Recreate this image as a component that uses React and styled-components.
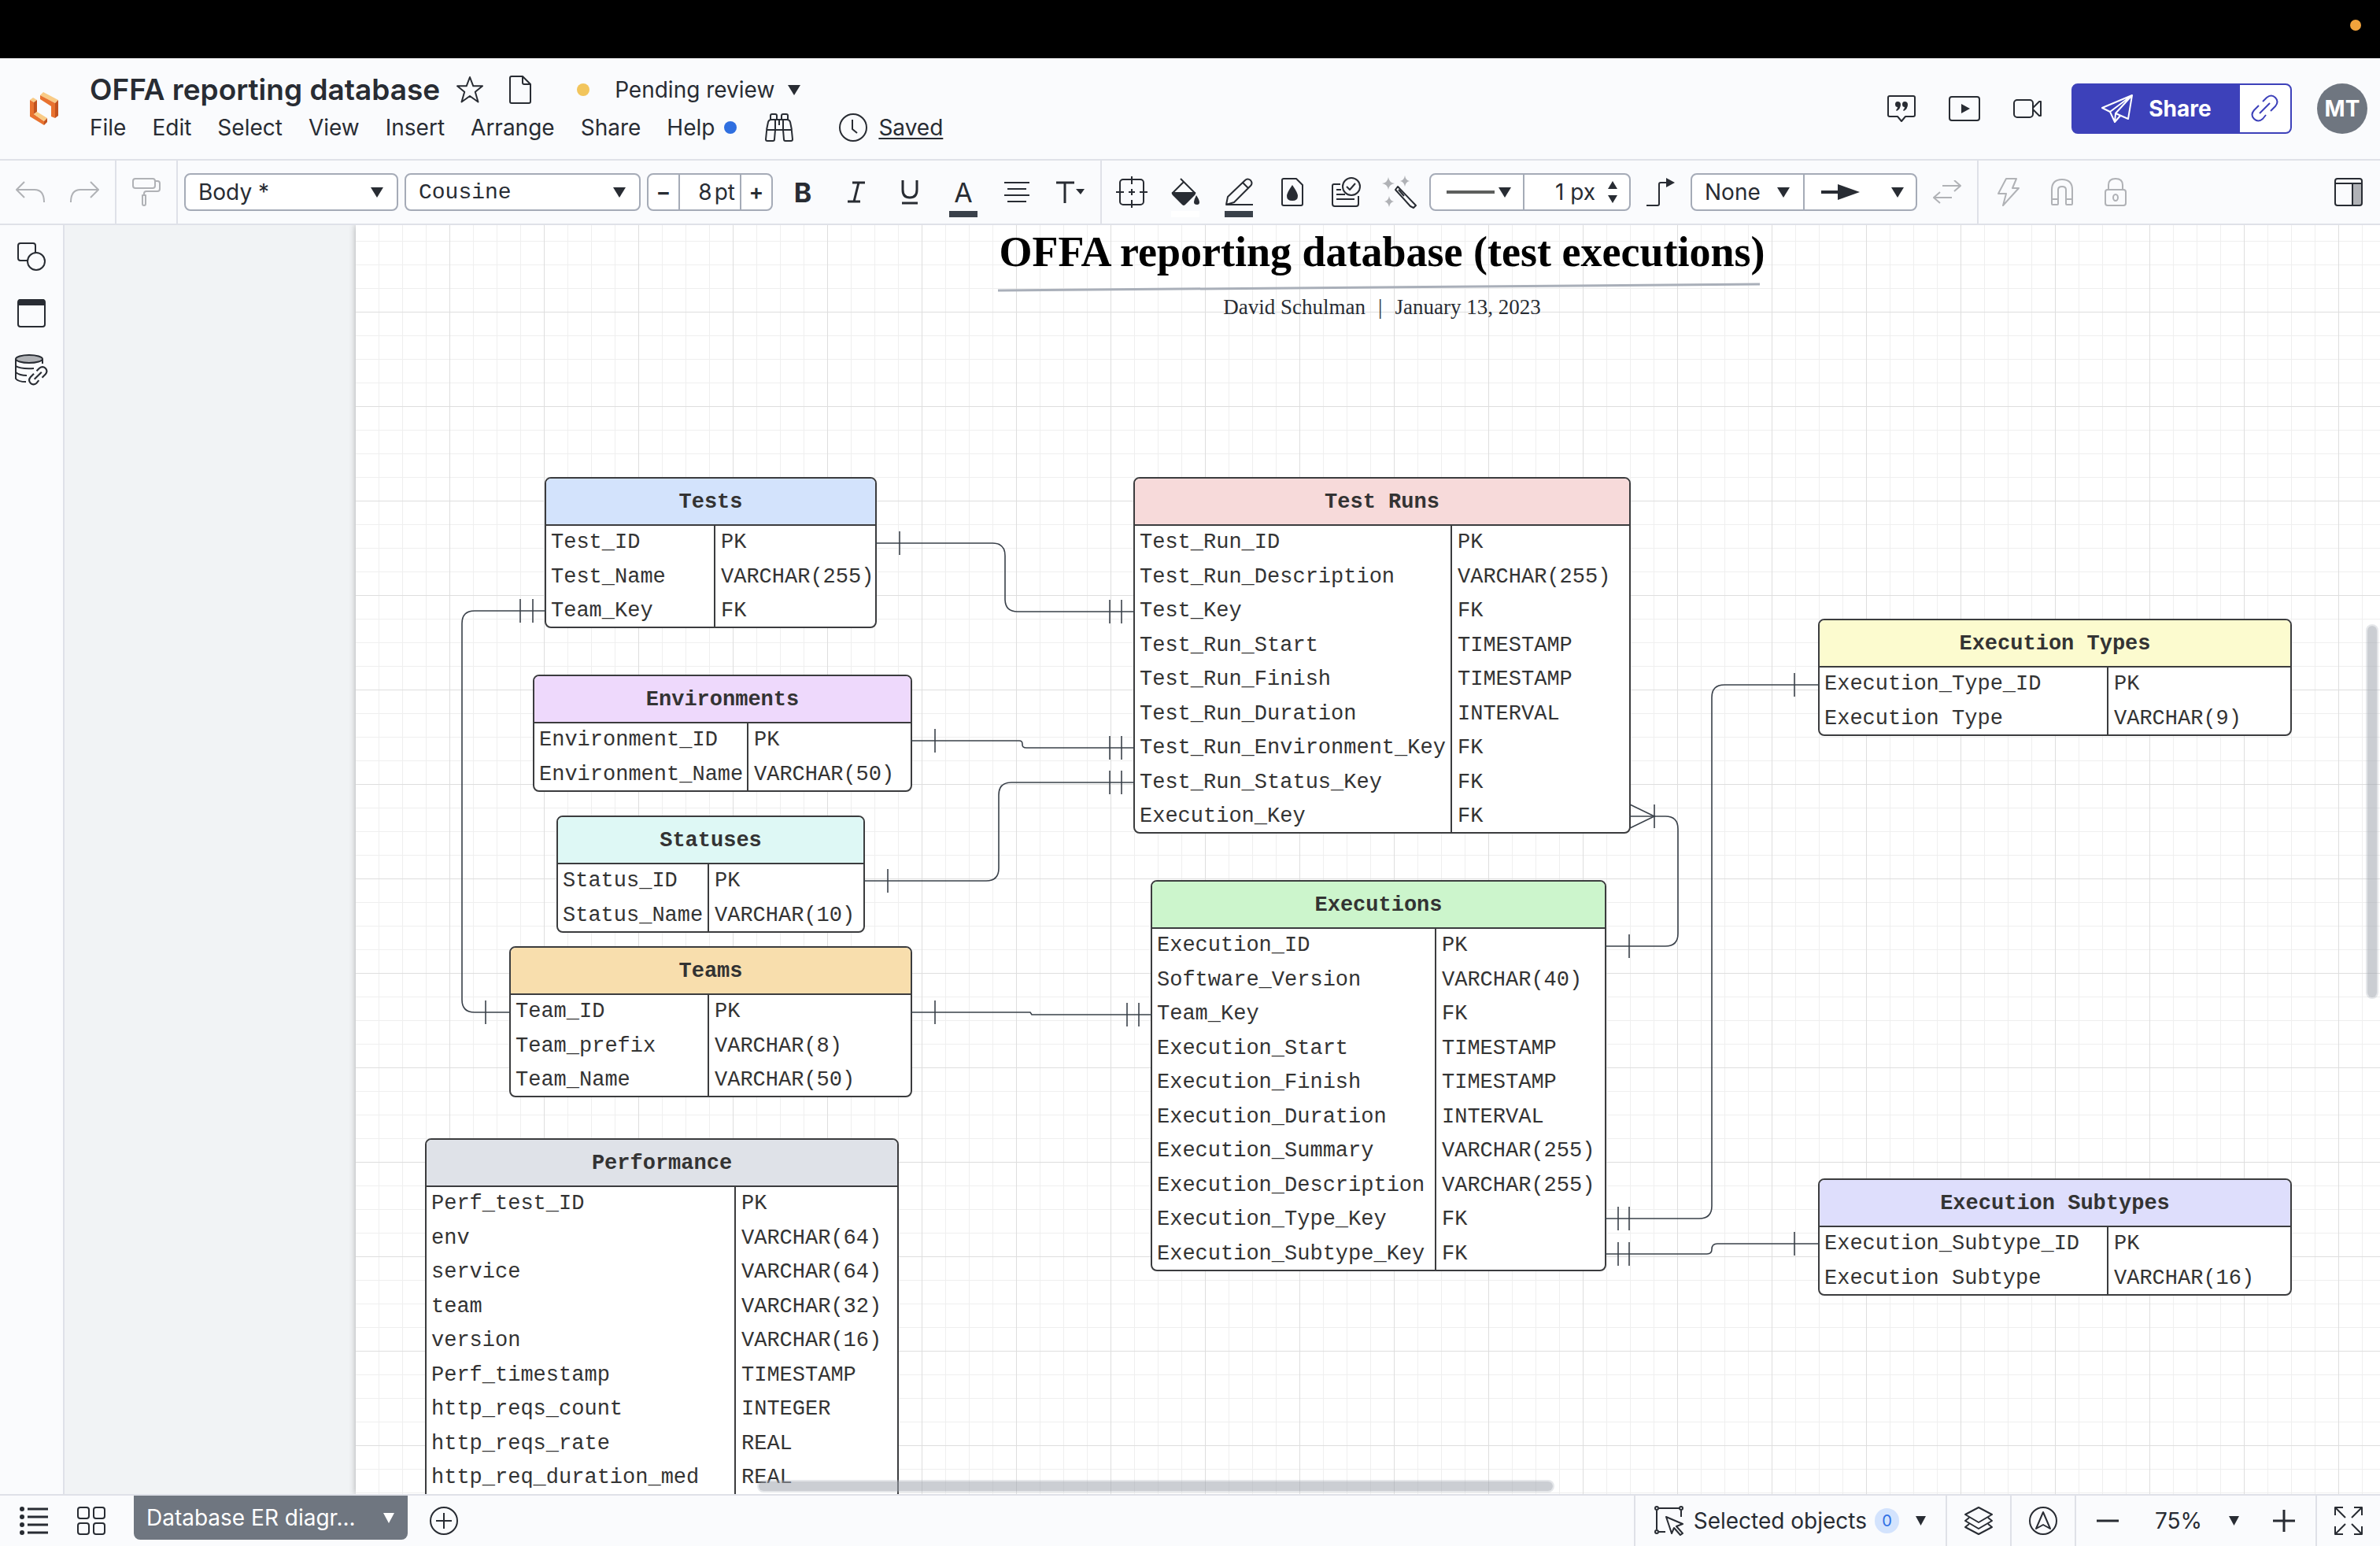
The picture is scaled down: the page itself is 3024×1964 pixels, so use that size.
import React from "react";
import styled, { createGlobalStyle } from "styled-components";

const ink = "#282c33";
const line = "#dfe1e8";
const chrome = "#fafbfd";
const field = "#a5abb7";
const muted = "#b0b2b6";

const GlobalStyle = createGlobalStyle`
  * { box-sizing: border-box; }
  body { margin: 0; background: ${chrome}; }
  body, button, input, select {
    font-family: Inter, "Liberation Sans", sans-serif;
    font-size: 28px;
    color: ${ink};
  }
  button { background: none; border: 0; padding: 0; margin: 0; cursor: pointer; }
`;

/* ---------- shell ---------- */

const Shell = styled.div`
  display: flex;
  flex-direction: column;
  height: 100vh;
  overflow: hidden;
`;

const SystemBar = styled.div`
  display: flex;
  align-items: center;
  justify-content: flex-end;
  flex: none;
  height: 74px;
  padding: 0 24px 10px;
  background: #000;
`;

const Dot = styled.span`
  flex: none;
  width: ${(p) => p.$size}px;
  height: ${(p) => p.$size}px;
  border-radius: 50%;
  background: ${(p) => p.$color};
`;

const Header = styled.header`
  display: flex;
  align-items: center;
  flex: none;
  height: 130px;
  padding: 0 16px 0 38px;
  background: ${chrome};
  border-bottom: 2px solid ${line};
`;

const LogoLink = styled.a`
  display: flex;
  width: 76px;
`;

const DocInfo = styled.div`
  display: flex;
  flex-direction: column;
`;

const InfoRow = styled.div`
  display: flex;
  align-items: center;
  height: 48px;
`;

const DocTitle = styled.h1`
  margin: 0 20px 0 0;
  font-size: 37px;
  font-weight: 600;
  line-height: 44px;
  white-space: nowrap;
`;

const PlainButton = styled.button`
  display: flex;
  align-items: center;
  gap: ${(p) => p.$gap || 0}px;
  margin-right: ${(p) => p.$after || 0}px;
  line-height: 36px;
  white-space: nowrap;
`;

const StatusButton = styled(PlainButton)`
  gap: 16px;
  ${Dot} { margin-right: 16px; }
`;

const Menu = styled.nav`
  display: flex;
  align-items: center;
  gap: 33px;
  margin-right: 36px;
`;

const Underlined = styled.span`
  text-decoration: underline;
  text-decoration-thickness: 2px;
  text-underline-offset: 3px;
`;

const Actions = styled.div`
  display: flex;
  align-items: center;
  margin-left: auto;
`;

const IconButton = styled.button`
  display: flex;
  align-items: center;
  justify-content: center;
  flex: none;
  width: ${(p) => p.$w || 68}px;
  height: 64px;
  color: ${(p) => (p.disabled ? muted : ink)};
`;

const ShareGroup = styled.div`
  display: flex;
  height: 64px;
  margin: 0 32px 0 16px;
  border: 2px solid #3d41ba;
  border-radius: 8px;
  overflow: hidden;
  background: #3d41ba;
`;

const ShareButton = styled.button`
  display: flex;
  align-items: center;
  justify-content: center;
  gap: 20px;
  width: 212px;
  color: #fff;
  font-weight: 700;
`;

const LinkButton = styled.button`
  display: flex;
  align-items: center;
  justify-content: center;
  width: 64px;
  background: #fff;
  color: #3d41ba;
`;

const Avatar = styled.button`
  width: 64px;
  height: 64px;
  border-radius: 50%;
  background: #6f7680;
  color: #fff;
  font-weight: 700;
`;

/* ---------- toolbar ---------- */

const Toolbar = styled.div`
  display: flex;
  flex: none;
  height: 82px;
  background: ${chrome};
  border-bottom: 2px solid ${line};
`;

const ToolGroup = styled.div`
  display: flex;
  align-items: center;
  flex: none;
  padding: 0 ${(p) => p.$px || 4}px;
  border-right: ${(p) => (p.$last ? 0 : 2)}px solid ${line};
  margin-left: ${(p) => (p.$last === "end" ? "auto" : 0)};
`;

const Fields = styled.div`
  display: flex;
  gap: 8px;
  padding: 0 4px;
`;

const FieldBox = styled.div`
  display: flex;
  align-items: stretch;
  width: ${(p) => p.$w}px;
  height: 48px;
  background: #fff;
  border: 2px solid ${field};
  border-radius: 8px;
  overflow: hidden;
  margin: 0 ${(p) => p.$mx || 0}px;
`;

const SelectWrap = styled.label`
  position: relative;
  display: flex;
  align-items: center;
  flex: 1;
  min-width: 0;
  svg {
    position: absolute;
    right: 16px;
    pointer-events: none;
  }
`;

const Select = styled.select`
  appearance: none;
  width: 100%;
  height: 100%;
  padding: 0 36px 0 16px;
  border: 0;
  background: none;
  outline: 0;
  font-family: ${(p) => (p.$mono ? '"Liberation Mono", monospace' : "inherit")};
`;

const SegButton = styled.button`
  display: flex;
  align-items: center;
  justify-content: ${(p) => (p.$spread ? "space-between" : "center")};
  flex: none;
  width: ${(p) => p.$w}px;
  padding: ${(p) => (p.$spread ? "0 14px 0 20px" : 0)};
  font-weight: 600;
`;

const Seg = styled.label`
  display: flex;
  align-items: center;
  flex: 1;
  min-width: 0;
  gap: 3px;
  padding-right: ${(p) => p.$pad}px;
  border: solid ${field};
  border-width: 0 ${(p) => (p.$both ? 2 : 0)}px 0 2px;
`;

const TextInput = styled.input`
  flex: 1;
  width: 0;
  min-width: 0;
  padding: 0;
  border: 0;
  outline: 0;
  background: none;
  text-align: right;
`;

const Spinner = styled.span`
  display: flex;
  flex-direction: column;
  gap: 8px;
  margin-left: 12px;
  button { display: flex; }
`;

const Divided = styled.div`
  display: flex;
  width: ${(p) => p.$w}px;
  border-right: 2px solid ${field};
`;

const Glyph = styled.span`
  display: flex;
  flex-direction: column;
  align-items: center;
  justify-content: center;
  position: relative;
  height: 64px;
  font-size: 34px;
  font-weight: ${(p) => (p.$bold ? 700 : 400)};
`;

const Swatch = styled.span`
  position: absolute;
  bottom: 0;
  width: 36px;
  height: 8px;
  background: ${(p) => p.$color};
`;

/* ---------- workspace ---------- */

const Workspace = styled.div`
  display: flex;
  flex: 1;
  min-height: 0;
`;

const Rail = styled.aside`
  flex: none;
  width: 82px;
  padding-top: 4px;
  background: ${chrome};
  border-right: 2px solid ${line};
`;

const RailButton = styled(IconButton)`
  width: 80px;
  height: 72px;
`;

const Canvas = styled.main`
  position: relative;
  display: flex;
  flex: 1;
  min-width: 0;
  padding-left: 370px;
  background: #f1f3f5;
  overflow: hidden;
`;

const Paper = styled.div`
  position: relative;
  flex: 1;
  min-width: 0;
  background-color: #fff;
  background-image: linear-gradient(#dedede 1px, transparent 1px),
    linear-gradient(90deg, #dedede 1px, transparent 1px),
    linear-gradient(#efefef 1px, transparent 1px),
    linear-gradient(90deg, #efefef 1px, transparent 1px);
  background-size: 120px 120px, 120px 120px, 30px 30px, 30px 30px;
  background-position: 0 110px, 119px 0, 0 20px, 29px 0;
  box-shadow: 0 0 8px rgba(0, 0, 0, 0.3);
`;

const Heading = styled.div`
  position: absolute;
  left: 816px;
  top: 2px;
  width: 976px;
  display: flex;
  flex-direction: column;
  align-items: center;
  font-family: "Liberation Serif", serif;
`;

const BoardTitle = styled.h2`
  margin: 0;
  font-size: 54px;
  line-height: 64px;
  font-weight: 700;
  color: #000;
  white-space: nowrap;
`;

const Byline = styled.p`
  display: flex;
  gap: 16px;
  margin: 0;
  font-size: 27px;
  line-height: 36px;
  white-space: nowrap;
`;

const Links = styled.svg`
  position: absolute;
  left: 0;
  top: 0;
  width: 100%;
  height: 100%;
  fill: none;
  stroke: #3a414a;
  stroke-width: 1.6;
`;

const EntityBox = styled.div`
  position: absolute;
  left: ${(p) => p.$x}px;
  top: ${(p) => p.$y}px;
  width: ${(p) => p.$w}px;
  background: #fff;
  border: 2px solid #3b3c3e;
  border-radius: 8px;
  overflow: hidden;
`;

const EntityTable = styled.table`
  width: 100%;
  table-layout: fixed;
  border-spacing: 0;
  color: #333;
  font-family: "Liberation Mono", monospace;
  font-size: 27px;
  line-height: 32px;
`;

const EntityName = styled.caption`
  height: 60px;
  padding-top: 2px;
  border-bottom: 2px solid #3b3c3e;
  background: ${(p) => p.$fill};
  line-height: 56px;
  font-weight: 700;
`;

const KeyCol = styled.col`
  width: ${(p) => p.$w}px;
`;

const Row = styled.tr`
  height: 43px;
  &:nth-child(even) { height: 44px; }
  &:first-child { height: 41px; }
`;

const Cell = styled.td`
  padding: 0 0 4px 6px;
  vertical-align: bottom;
  white-space: nowrap;
  & + & {
    padding-left: 7px;
    border-left: 2px solid #3b3c3e;
  }
`;

const ScrollThumb = styled.div`
  position: absolute;
  border-radius: 8px;
  border: 2px solid rgba(170, 176, 184, 0.3);
  background: rgba(160, 166, 175, 0.55);
  background-clip: padding-box;
`;

const HorizontalThumb = styled(ScrollThumb)`
  left: 880px;
  bottom: 2px;
  width: 1013px;
  height: 16px;
`;

const VerticalThumb = styled(ScrollThumb)`
  right: 2px;
  top: 507px;
  width: 16px;
  height: 476px;
`;

/* ---------- footer ---------- */

const Footer = styled.footer`
  display: flex;
  flex: none;
  height: 66px;
  background: ${chrome};
  border-top: 2px solid ${line};
`;

const FooterGroup = styled.div`
  display: flex;
  align-items: center;
  height: 64px;
  padding: 0 ${(p) => p.$px || 0}px;
  gap: ${(p) => p.$gap || 0}px;
  border-left: ${(p) => (p.$rule ? 2 : 0)}px solid ${line};
  margin-left: ${(p) => (p.$push ? "auto" : 0)};
`;

const PageViews = styled(FooterGroup)`
  padding: 0 36px 0 25px;
  gap: 37px;
`;

const PageTab = styled.button`
  display: flex;
  align-items: center;
  justify-content: space-between;
  width: 348px;
  height: 56px;
  padding: 0 16px;
  border-radius: 0 0 8px 8px;
  background: #6f7680;
  color: #fff;
`;

const Count = styled.span`
  width: 31px;
  margin: 0 8px 0 -2px;
  border-radius: 16px;
  background: #d3e3fd;
  color: #2f6fe4;
  font-size: 20px;
  line-height: 32px;
  text-align: center;
`;

const ZoomField = styled(SelectWrap)`
  flex: none;
  width: 136px;
  height: 48px;
  svg { right: 12px; }
`;

/* ---------- icons ---------- */

const IconSvg = styled.svg`
  flex: none;
  fill: none;
  stroke: currentColor;
  stroke-linejoin: round;
`;

const Icon = ({ w = 36, h = 36, children, sw = 2 }) => (
  <IconSvg width={w} height={h} viewBox={`0 0 ${w} ${h}`} strokeWidth={sw} aria-hidden="true">
    {children}
  </IconSvg>
);

const solid = { fill: "currentColor", stroke: "none" };

const Caret = ({ w = 18, h = 13 }) => (
  <Icon w={w} h={h}><path {...solid} d={`M1 0H${w - 1}L${w / 2} ${h}Z`} /></Icon>
);

const Logo = () => (
  <Icon w={38} h={42}>
    <g stroke="none">
      <path fill="#f9cb86" d="M17 0 36 10 32 14 13 4Z" />
      <path fill="#e8722f" d="M13 4 32 14V33L27 31V18L13 9Z" />
      <path fill="#c2531f" d="M32 14 36 10V30L32 33Z" />
      <path fill="#f9cb86" d="M0 10 4 7 9 10 5 13Z" />
      <path fill="#e8722f" d="M0 10 5 13V28L18 37V42L0 31Z" />
      <path fill="#c2531f" d="M5 13 9 10V25L5 28Z" />
      <path fill="#f9cb86" d="M5 28 9 25 22 33 18 37Z" />
      <path fill="#c2531f" d="M18 37 22 33V38L18 42Z" />
    </g>
  </Icon>
);

const StarIcon = () => (
  <Icon><path d="M18 2 22.300 13.300H34L24.800 20.700 28.500 33.500 18 26 7.500 33.500 11.200 20.700 2 13.300H13.700Z" /></Icon>
);
const FileIcon = () => (
  <Icon w={28}><path d="M3 1H17L27 11V33Q27 35 25 35H3Q1 35 1 33V3Q1 1 3 1ZM17 1V9Q17 11 19 11H27" /></Icon>
);
const BinocularsIcon = () => (
  <Icon><path d="M7 8V3Q7 1 9 1H13Q15 1 15 3V8M21 8V3Q21 1 23 1H27Q29 1 29 3V8M2 21 4 11Q5 8 8 8H28Q31 8 32 11L34 21M13 8V21M23 8V21M18 8V15M13 21H3Q2 21 2 23L1 33Q1 35 3 35H10Q12 35 12 33L13 21H23L24 33Q24 35 26 35H33Q35 35 35 33L34 23Q34 21 33 21H23" /></Icon>
);
const ClockIcon = () => (
  <Icon><circle cx="18" cy="18" r="17" /><path d="M17 8V20L23 25" /></Icon>
);
const QuoteIcon = () => (
  <Icon w={38}>
    <path d="M4 2H34Q36 2 36 4V26Q36 28 34 28H24L19 34 14 28H4Q2 28 2 26V4Q2 2 4 2Z" />
    <path {...solid} d="M14 9Q18 9 18 13 18 18 13 21L12 20Q14 18 14 16 11 16 11 12.500 11 9 14 9ZM23 9Q27 9 27 13 27 18 22 21L21 20Q23 18 23 16 20 16 20 12.500 20 9 23 9Z" />
  </Icon>
);
const PlayIcon = () => (
  <Icon w={40} h={32}><rect x="1" y="1" width="38" height="30" rx="3" /><path {...solid} d="M16 10 27 16 16 22Z" /></Icon>
);
const CameraIcon = () => (
  <Icon h={26}><rect x="1" y="2" width="24" height="22" rx="4" /><path d="M25 12 33 4H35V22H33L25 14" /></Icon>
);
const PlaneIcon = () => (
  <Icon w={40}><path d="M39 1 1 17 11 22 39 1 18 24 34 31 39 1M11 22 17 35 24 27M18 24 17 35" /></Icon>
);
const LinkPath = ({ t }) => (
  <path transform={t} d="M15 9 20 4Q26 -1 31 4 36 9 31 15L25 21M19 26 15 31Q9 36 4 31 -1 26 4 20L10 14M11 24 24 11" />
);
const UndoIcon = () => (
  <Icon w={38} h={28}><path d="M11 1 1 11 11 21M1 11H24Q36 11 36 27" /></Icon>
);
const RedoIcon = () => (
  <Icon w={38} h={28}><path d="M27 1 37 11 27 21M37 11H14Q2 11 2 27" /></Icon>
);
const PainterIcon = () => (
  <Icon><rect x="1" y="1" width="28" height="12" rx="3" /><path d="M29 4H32Q35 4 35 7V14Q35 17 32 17H18Q15 17 15 20V22" /><path d="M13 22H17V33Q17 35 15 35 13 35 13 33Z" /></Icon>
);
const AlignIcon = () => (
  <Icon w={32} h={26}><path d="M0 1H32M4 9H28M0 17H32M4 25H28" /></Icon>
);
const TextOptionsIcon = () => (
  <Icon h={28}><path strokeWidth="3" d="M0 2H23M11 2V28" /><path {...solid} d="M25 10H36L31 17Z" /></Icon>
);
const ShapeIcon = () => (
  <Icon w={40} h={40}><rect x="5" y="4" width="30" height="32" rx="4" /><path d="M20 0V10M20 16V24M20 30V40M0 20H10M16 20H24M30 20H40" /></Icon>
);
const BucketIcon = () => (
  <Icon><path d="M2 19 16 5 30 19M16 5 12 1" /><path {...solid} d="M1 18H31Q32 20 30 22L18 34Q16 36 14 34L2 22Q0 20 1 18ZM32 22Q36 28 36 31 36 34 33 34 29 34 29 31 29 28 32 22Z" /></Icon>
);
const PencilIcon = () => (
  <Icon><path d="M2 34 4 24 26 3Q29 0 33 3 36 7 33 10L12 31 2 34H36M23 6 30 13" /></Icon>
);
const OpacityIcon = () => (
  <Icon w={28}><path d="M3 1H19L27 9V33Q27 35 25 35H3Q1 35 1 33V3Q1 1 3 1Z" /><path {...solid} d="M14 9Q21 19 21 23 21 29 14 29 7 29 7 23 7 19 14 9Z" /></Icon>
);
const ChecklistIcon = () => (
  <Icon w={38} h={38}><path d="M12 9H4Q2 9 2 11V34Q2 37 5 37H32Q35 37 35 34V24M7 16H13M7 22H18M7 28H30" /><circle cx="26" cy="12" r="11" /><path d="M20 12 24 16 31 8" /></Icon>
);
const WandIcon = () => (
  <Icon w={44} h={42}>
    <path d="M17 18 20 14 43 38 40 41 36 39ZM17 18 36 39M21 18 28 26" />
    <path fill={muted} stroke="none" d="M8 2Q9 9 16 10 9 11 8 18 7 11 0 10 7 9 8 2ZM29 0Q30 6 35 7 30 8 29 14 28 8 23 7 28 6 29 0ZM9 26Q10 32 15 33 10 34 9 40 8 34 3 33 8 32 9 26Z" />
  </Icon>
);
const StrokeIcon = () => <Icon w={61} h={4}><path stroke="#5d5f5d" strokeWidth="4" d="M0 2H61" /></Icon>;
const ElbowIcon = () => (
  <Icon><path d="M0 35H14Q16 35 16 33V8Q16 6 18 6H26" /><path {...solid} d="M25 0 36 6 25 12Z" /></Icon>
);
const ArrowIcon = () => (
  <Icon w={50} h={22}><path strokeWidth="4" d="M1 11H24" /><path {...solid} d="M22 1 50 11 22 21Z" /></Icon>
);
const SwapIcon = () => (
  <Icon w={38} h={30}><path d="M13 7H36M28 0 36 7 28 14M25 22H2M10 15 2 22 10 29" /></Icon>
);
const BoltIcon = () => (
  <Icon w={30}><path d="M12 1H25L20 13H28L8 35 12 20H2Z" /></Icon>
);
const MagnetIcon = () => (
  <Icon w={28} h={34}><path d="M1 32V14Q1 1 14 1 27 1 27 14V32Q27 33 26 33H20Q19 33 19 32V14Q19 10 14 10 9 10 9 14V32Q9 33 8 33H2Q1 33 1 32ZM1 26H9M19 26H27" /></Icon>
);
const LockIcon = () => (
  <Icon w={28}><rect x="1" y="15" width="26" height="20" rx="3" /><path d="M5 15V9Q5 1 14 1 23 1 23 9V15" /><ellipse cx="14" cy="25" rx="3" ry="4" /></Icon>
);
const PanelIcon = () => (
  <Icon><path fill={muted} stroke="none" d="M24 8H34V34H24Z" /><rect x="1" y="1" width="34" height="34" rx="3" /><path d="M1 7H35M23 7V35" /></Icon>
);
const ShapesIcon = () => (
  <Icon><path d="M13 23H4Q1 23 1 20V4Q1 1 4 1H20Q23 1 23 4V13" /><circle cx="24" cy="24" r="11" /></Icon>
);
const ContainerIcon = () => (
  <Icon><rect x="1" y="1" width="34" height="34" rx="3" /><path {...solid} d="M1 3Q1 0 4 0H32Q35 0 35 3V8H1Z" /></Icon>
);
const DataIcon = () => (
  <Icon w={42} h={40}>
    <ellipse cx="18" cy="6" rx="17" ry="5" fill={muted} />
    <path d="M1 6V31Q4 35 14 35M35 6V12M1 15Q7 19 24 18M1 23Q6 27 15 27" />
    <g strokeWidth="3"><LinkPath t="translate(17 15) scale(.7)" /></g>
  </Icon>
);
const ListIcon = () => (
  <Icon>
    <path strokeWidth="3" d="M10 3H36M10 13H36M10 23H36M10 33H36" />
    <g {...solid}>{[3, 13, 23, 33].map((y) => <circle key={y} cx="3" cy={y} r="3" />)}</g>
  </Icon>
);
const TilesIcon = () => (
  <Icon>{[[1, 1], [21, 1], [1, 21], [21, 21]].map(([x, y]) => <rect key={x + "-" + y} x={x} y={y} width="14" height="14" rx="3" />)}</Icon>
);
const AddIcon = () => (
  <Icon><circle cx="18" cy="18" r="17" /><path d="M18 8V28M8 18H28" /></Icon>
);
const SelectionIcon = () => (
  <Icon w={38} h={38}>
    <path d="M6 3H31M3 6V30M34 6V14M6 33H14" />
    <circle cx="3" cy="3" r="2" /><circle cx="34" cy="3" r="2" /><circle cx="3" cy="33" r="2" />
    <path d="M15 14 36 23 28 26 36 35 33 37 25 28 22 35Z" />
  </Icon>
);
const LayersIcon = () => (
  <Icon><path d="M18 1 35 10 18 20 1 10ZM6 14 1 18 18 28 35 18 30 14M6 22 1 26 18 35 35 26 30 22" /></Icon>
);
const NavigateIcon = () => (
  <Icon><circle cx="18" cy="18" r="17" /><path d="M18 7 27 28 18 23 9 28Z" /></Icon>
);
const MinusIcon = () => <Icon w={28} h={28}><path strokeWidth="3" d="M0 14H28" /></Icon>;
const PlusIcon = () => <Icon w={28} h={28}><path strokeWidth="3" d="M0 14H28M14 0V28" /></Icon>;
const ExpandIcon = () => (
  <Icon><path d="M1 11V1H11M25 1H35V11M35 25V35H25M11 35H1V25M1 1 14 14M35 1 22 14M35 35 22 22M1 35 14 22" /></Icon>
);

/* ---------- diagram data ---------- */

const entities = [
  { name: "Tests", x: 240, y: 320, w: 422, key: 213, fill: "#d3e3fc",
    rows: [["Test_ID", "PK"], ["Test_Name", "VARCHAR(255)"], ["Team_Key", "FK"]] },
  { name: "Environments", x: 225, y: 571, w: 482, key: 270, fill: "#eed9fc",
    rows: [["Environment_ID", "PK"], ["Environment_Name", "VARCHAR(50)"]] },
  { name: "Statuses", x: 255, y: 750, w: 392, key: 190, fill: "#def8f5",
    rows: [["Status_ID", "PK"], ["Status_Name", "VARCHAR(10)"]] },
  { name: "Teams", x: 195, y: 916, w: 512, key: 250, fill: "#f8dead",
    rows: [["Team_ID", "PK"], ["Team_prefix", "VARCHAR(8)"], ["Team_Name", "VARCHAR(50)"]] },
  { name: "Performance", x: 88, y: 1160, w: 602, key: 391, fill: "#dfe2e8",
    rows: [["Perf_test_ID", "PK"], ["env", "VARCHAR(64)"], ["service", "VARCHAR(64)"], ["team", "VARCHAR(32)"],
      ["version", "VARCHAR(16)"], ["Perf_timestamp", "TIMESTAMP"], ["http_reqs_count", "INTEGER"],
      ["http_reqs_rate", "REAL"], ["http_req_duration_med", "REAL"], ["", ""]] },
  { name: "Test Runs", x: 988, y: 320, w: 632, key: 401, fill: "#f7dada",
    rows: [["Test_Run_ID", "PK"], ["Test_Run_Description", "VARCHAR(255)"], ["Test_Key", "FK"],
      ["Test_Run_Start", "TIMESTAMP"], ["Test_Run_Finish", "TIMESTAMP"], ["Test_Run_Duration", "INTERVAL"],
      ["Test_Run_Environment_Key", "FK"], ["Test_Run_Status_Key", "FK"], ["Execution_Key", "FK"]] },
  { name: "Executions", x: 1010, y: 832, w: 579, key: 359, fill: "#ccf5cc",
    rows: [["Execution_ID", "PK"], ["Software_Version", "VARCHAR(40)"], ["Team_Key", "FK"],
      ["Execution_Start", "TIMESTAMP"], ["Execution_Finish", "TIMESTAMP"], ["Execution_Duration", "INTERVAL"],
      ["Execution_Summary", "VARCHAR(255)"], ["Execution_Description", "VARCHAR(255)"],
      ["Execution_Type_Key", "FK"], ["Execution_Subtype_Key", "FK"]] },
  { name: "Execution Types", x: 1858, y: 500, w: 602, key: 365, fill: "#fcfbcf",
    rows: [["Execution_Type_ID", "PK"], ["Execution Type", "VARCHAR(9)"]] },
  { name: "Execution Subtypes", x: 1858, y: 1211, w: 602, key: 365, fill: "#dedefc",
    rows: [["Execution_Subtype_ID", "PK"], ["Execution Subtype", "VARCHAR(16)"]] },
];

const wires = [
  "M660 404H809Q825 404 825 420V475Q825 491 841 491H990",
  "M705 655H843Q847 655 847 659V660Q847 664 852 664H990",
  "M645 833H801Q817 833 817 817V724Q817 708 833 708H990",
  "M242 490H151Q135 490 135 506V984Q135 1000 151 1000H197",
  "M705 1000H857L859 1003H1012",
  "M1618 751H1664Q1680 751 1680 767V900Q1680 916 1664 916H1587",
  "M1587 1262H1707Q1723 1262 1723 1246V600Q1723 584 1739 584H1860",
  "M1587 1307H1717Q1723 1307 1723 1301 1723 1294 1730 1294H1860",
  "M1619 736 1650 751 1619 766",
];

/* x and y of the crossing point of each cardinality mark */
const ticks = [
  [691, 404], [958, 491], [973, 491], [736, 655], [958, 664], [973, 664],
  [676, 833], [958, 708], [973, 708], [209, 490], [225, 490], [165, 1000],
  [736, 1000], [980, 1003], [995, 1003], [1650, 751], [1618, 916],
  [1604, 1262], [1618, 1262], [1828, 584], [1604, 1307], [1618, 1307], [1828, 1294],
];

const Entity = ({ name, x, y, w, keyWidth, fill, rows }) => (
  <EntityBox $x={x} $y={y} $w={w}>
    <EntityTable>
      <EntityName $fill={fill}>{name}</EntityName>
      <colgroup><KeyCol $w={keyWidth} /><col /></colgroup>
      <tbody>
        {rows.map(([column, type], i) => (
          <Row key={i}><Cell>{column}</Cell><Cell>{type}</Cell></Row>
        ))}
      </tbody>
    </EntityTable>
  </EntityBox>
);

const Picker = ({ label, value, mono }) => (
  <SelectWrap>
    <Select aria-label={label} defaultValue={value} $mono={mono}><option>{value}</option></Select>
    <Caret />
  </SelectWrap>
);

const Tool = ({ label, icon, disabled }) => (
  <IconButton aria-label={label} disabled={disabled}>{icon}</IconButton>
);

export default function App() {
  return (
    <Shell>
      <GlobalStyle />
      <SystemBar><Dot $size={14} $color="#f2a33c" /></SystemBar>

      <Header>
        <LogoLink href="#" aria-label="Home"><Logo /></LogoLink>
        <DocInfo>
          <InfoRow>
            <DocTitle>OFFA reporting database</DocTitle>
            <PlainButton aria-label="Favorite" $after={32}><StarIcon /></PlainButton>
            <PlainButton aria-label="Document" $after={58}><FileIcon /></PlainButton>
            <StatusButton><Dot $size={16} $color="#f2c55c" />Pending review<Caret /></StatusButton>
          </InfoRow>
          <InfoRow>
            <Menu>
              {["File", "Edit", "Select", "View", "Insert", "Arrange", "Share"].map((m) => (
                <PlainButton key={m}>{m}</PlainButton>
              ))}
              <PlainButton $gap={12}>Help<Dot $size={16} $color="#2f6fe0" /></PlainButton>
            </Menu>
            <PlainButton aria-label="Find" $after={58}><BinocularsIcon /></PlainButton>
            <PlainButton $gap={14}><ClockIcon /><Underlined>Saved</Underlined></PlainButton>
          </InfoRow>
        </DocInfo>
        <Actions>
          <IconButton $w={80} aria-label="Comments"><QuoteIcon /></IconButton>
          <IconButton $w={80} aria-label="Present"><PlayIcon /></IconButton>
          <IconButton $w={80} aria-label="Video call"><CameraIcon /></IconButton>
          <ShareGroup>
            <ShareButton><PlaneIcon />Share</ShareButton>
            <LinkButton aria-label="Copy link"><Icon><LinkPath /></Icon></LinkButton>
          </ShareGroup>
          <Avatar>MT</Avatar>
        </Actions>
      </Header>

      <Toolbar>
        <ToolGroup $px={5}>
          <Tool label="Undo" disabled icon={<UndoIcon />} />
          <Tool label="Redo" disabled icon={<RedoIcon />} />
        </ToolGroup>
        <ToolGroup><Tool label="Format painter" disabled icon={<PainterIcon />} /></ToolGroup>
        <ToolGroup>
          <Fields>
            <FieldBox $w={272}><Picker label="Text style" value="Body *" /></FieldBox>
            <FieldBox $w={300}><Picker label="Font" value="Cousine" mono /></FieldBox>
            <FieldBox $w={160}>
              <SegButton $w={38} aria-label="Decrease size">−</SegButton>
              <Seg $both $pad={6}><TextInput aria-label="Font size" defaultValue="8" />pt</Seg>
              <SegButton $w={38} aria-label="Increase size">+</SegButton>
            </FieldBox>
          </Fields>
          <Tool label="Bold" icon={<Glyph $bold>B</Glyph>} />
          <Tool label="Italic" icon={<Icon w={22} h={28} sw={3}><path d="M6 2H22M0 26H16M14 2 8 26" /></Icon>} />
          <Tool label="Underline" icon={<Icon w={22} h={32} sw={3}><path d="M2 1V13Q2 23 11 23 20 23 20 13V1M1 30H21" /></Icon>} />
          <Tool label="Text color" icon={<Glyph>A<Swatch $color="#3a414a" /></Glyph>} />
          <Tool label="Align" icon={<AlignIcon />} />
          <Tool label="Text options" icon={<TextOptionsIcon />} />
        </ToolGroup>
        <ToolGroup>
          <Tool label="Shape" icon={<ShapeIcon />} />
          <Tool label="Fill" icon={<Glyph><BucketIcon /><Swatch $color="#fff" /></Glyph>} />
          <Tool label="Line color" icon={<Glyph><PencilIcon /><Swatch $color="#3a414a" /></Glyph>} />
          <Tool label="Opacity" icon={<OpacityIcon />} />
          <Tool label="Conditional formatting" icon={<ChecklistIcon />} />
          <Tool label="Magic" icon={<WandIcon />} />
          <FieldBox $w={256} $mx={4}>
            <SegButton $w={117} $spread aria-label="Line style"><StrokeIcon /><Caret /></SegButton>
            <Seg $pad={14}>
              <TextInput aria-label="Line width" defaultValue="1 px" />
              <Spinner>
                <button aria-label="Thicker"><Icon w={14} h={10}><path {...solid} d="M7 0 13 10H1Z" /></Icon></button>
                <button aria-label="Thinner"><Icon w={14} h={10}><path {...solid} d="M1 0H13L7 10Z" /></Icon></button>
              </Spinner>
            </Seg>
          </FieldBox>
          <Tool label="Line shape" icon={<ElbowIcon />} />
          <FieldBox $w={288} $mx={4}>
            <Divided $w={143}><Picker label="Line start" value="None" /></Divided>
            <SegButton $w={141} $spread aria-label="Line end"><ArrowIcon /><Caret /></SegButton>
          </FieldBox>
          <Tool label="Swap ends" disabled icon={<SwapIcon />} />
        </ToolGroup>
        <ToolGroup $last="start">
          <Tool label="Actions" disabled icon={<BoltIcon />} />
          <Tool label="Magnetize" disabled icon={<MagnetIcon />} />
          <Tool label="Lock" disabled icon={<LockIcon />} />
        </ToolGroup>
        <ToolGroup $last="end" $px={6}><Tool label="Side panel" icon={<PanelIcon />} /></ToolGroup>
      </Toolbar>

      <Workspace>
        <Rail>
          <RailButton aria-label="Shapes"><ShapesIcon /></RailButton>
          <RailButton aria-label="Containers"><ContainerIcon /></RailButton>
          <RailButton aria-label="Data"><DataIcon /></RailButton>
        </Rail>
        <Canvas>
          <Paper>
            <Heading>
              <BoardTitle>OFFA reporting database (test executions)</BoardTitle>
              <Icon w={976} h={20} sw={3}><path stroke="#a9afb9" d="M0 17 968 9" /></Icon>
              <Byline><span>David Schulman</span><span>|</span><span>January 13, 2023</span></Byline>
            </Heading>
            {entities.map(({ key, ...e }) => <Entity key={e.name} keyWidth={key} {...e} />)}
            <Links>
              {wires.map((d) => <path key={d} d={d} />)}
              {ticks.map(([x, y]) => <path key={x + "-" + y} d={`M${x} ${y - 15}V${y + 15}`} />)}
            </Links>
          </Paper>
          <HorizontalThumb />
          <VerticalThumb />
        </Canvas>
      </Workspace>

      <Footer>
        <PageViews>
          <PlainButton aria-label="Page list"><ListIcon /></PlainButton>
          <PlainButton aria-label="Page tiles"><TilesIcon /></PlainButton>
        </PageViews>
        <PageTab><span>Database ER diagr...</span><Caret w={16} /></PageTab>
        <FooterGroup $px={28}><PlainButton aria-label="Add page"><AddIcon /></PlainButton></FooterGroup>
        <FooterGroup $push $rule $px={24}>
          <PlainButton $gap={12}><SelectionIcon />Selected objects<Count>0</Count><Caret w={15} h={12} /></PlainButton>
        </FooterGroup>
        <FooterGroup $rule $px={22}><PlainButton aria-label="Layers"><LayersIcon /></PlainButton></FooterGroup>
        <FooterGroup $rule $px={22}><PlainButton aria-label="Navigate"><NavigateIcon /></PlainButton></FooterGroup>
        <FooterGroup $rule $px={26} $gap={30}>
          <PlainButton aria-label="Zoom out"><MinusIcon /></PlainButton>
          <ZoomField>
            <Select aria-label="Zoom" defaultValue="75%"><option>75%</option></Select>
            <Caret w={15} h={12} />
          </ZoomField>
          <PlainButton aria-label="Zoom in"><PlusIcon /></PlainButton>
        </FooterGroup>
        <FooterGroup $rule $px={22}><PlainButton aria-label="Full screen"><ExpandIcon /></PlainButton></FooterGroup>
      </Footer>
    </Shell>
  );
}
